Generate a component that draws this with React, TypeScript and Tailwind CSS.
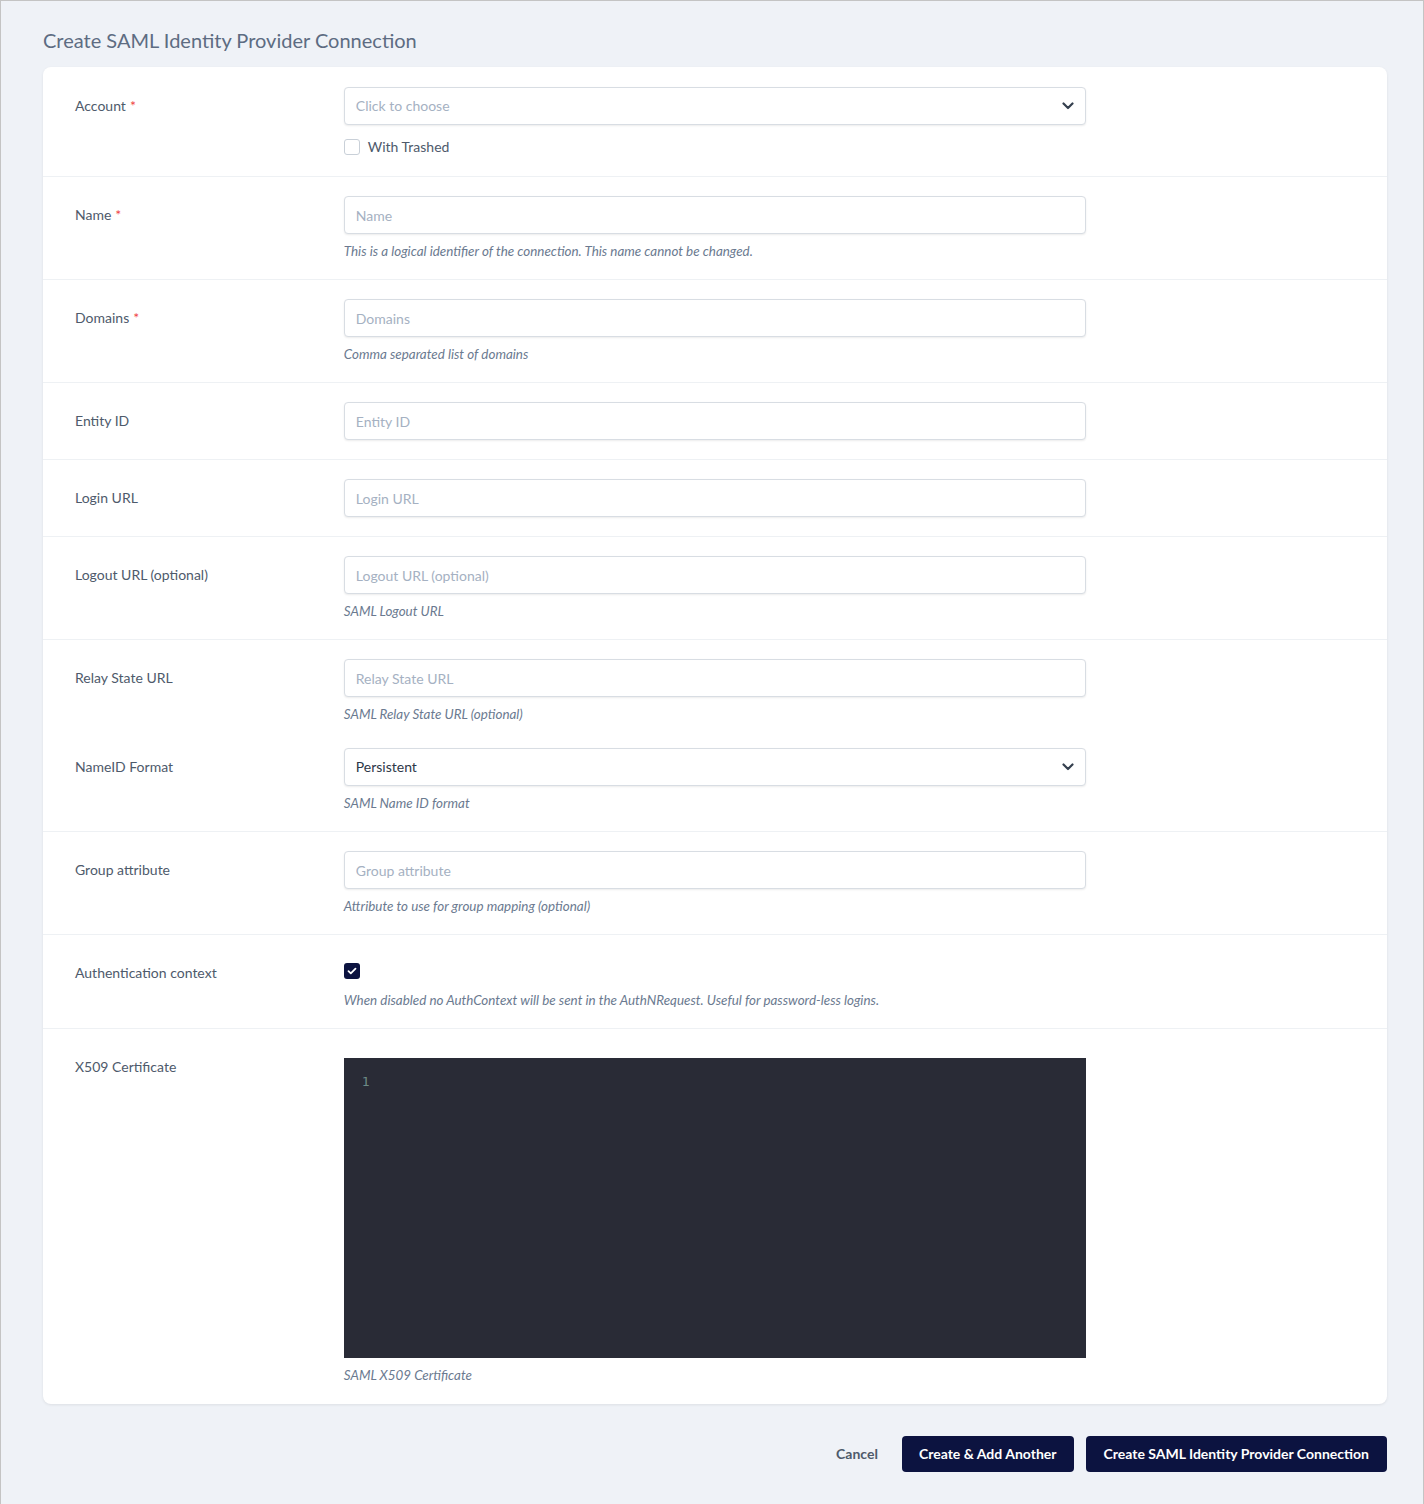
import React from 'react';

const font = { fontFamily: 'Lato, "Noto Sans", sans-serif' };

const Chevron: React.FC = () => (
  <svg width="12" height="8" viewBox="0 0 12 8" className="text-[#35404f]">
    <path d="M1.5 1.5 L6 6 L10.5 1.5" fill="none" stroke="currentColor" strokeWidth="2.2" strokeLinecap="round" strokeLinejoin="round" />
  </svg>
);

const Required = () => <span className="text-[#ef4444] ml-1">*</span>;

const Help: React.FC<{ children: React.ReactNode }> = ({ children }) => (
  <p className="mt-2 text-[13.4px] leading-[18px] italic text-[#6b7a90]">{children}</p>
);

const TextInput: React.FC<{ placeholder: string }> = ({ placeholder }) => (
  <input
    placeholder={placeholder}
    className="w-full h-[38px] px-[11px] rounded border border-[#d8dde3] shadow-[0_1px_2px_rgba(0,0,0,0.08)] text-sm text-[#3c4858] placeholder:text-[#a5b1c2] outline-none bg-white"
  />
);

const Select: React.FC<{ value: string; placeholder?: boolean }> = ({ value, placeholder }) => (
  <div className="w-full h-[38px] pl-[11px] pr-[11px] rounded border border-[#d8dde3] shadow-[0_1px_2px_rgba(0,0,0,0.08)] bg-white flex items-center justify-between">
    <span className={placeholder ? 'text-sm text-[#a5b1c2]' : 'text-sm text-[#2d3748]'}>{value}</span>
    <Chevron />
  </div>
);

const Row: React.FC<{ label: React.ReactNode; children: React.ReactNode; border?: boolean; pad?: string }> = ({
  label,
  children,
  border = true,
  pad = 'py-[19px]',
}) => (
  <div className={`flex ${border ? 'border-t border-[#eef1f4]' : ''}`}>
    <div className={`w-1/5 px-8 ${pad}`}>
      <div className="h-[38px] flex items-center text-sm text-[#4e5a6b]">{label}</div>
    </div>
    <div className={`w-3/5 px-8 ${pad}`}>{children}</div>
  </div>
);

export default function App() {
  return (
    <div style={font} className="w-[1424px] min-h-[1504px] bg-[#eff2f7] border border-[#c4c4c4]">
      <div className="pl-[42px] pr-[36px] pt-[25px] pb-8">
        <h1 className="text-xl leading-7 text-[#5d6c82] mb-[13px]">Create SAML Identity Provider Connection</h1>

        <div className="bg-white rounded-lg shadow-[0_1px_3px_rgba(0,0,0,0.08)]">
          <Row label={<>Account<Required /></>} border={false} pad="pt-5 pb-[19px]">
            <Select value="Click to choose" placeholder />
            <label className="mt-3 flex items-center gap-2 h-5">
              <span className="w-4 h-4 rounded-[3px] border border-[#c9d0d8] bg-white" />
              <span className="text-sm text-[#4e5a6b]">With Trashed</span>
            </label>
          </Row>

          <Row label={<>Name<Required /></>}>
            <TextInput placeholder="Name" />
            <Help>This is a logical identifier of the connection. This name cannot be changed.</Help>
          </Row>

          <Row label={<>Domains<Required /></>}>
            <TextInput placeholder="Domains" />
            <Help>Comma separated list of domains</Help>
          </Row>

          <Row label="Entity ID">
            <TextInput placeholder="Entity ID" />
          </Row>

          <Row label="Login URL">
            <TextInput placeholder="Login URL" />
          </Row>

          <Row label="Logout URL (optional)">
            <TextInput placeholder="Logout URL (optional)" />
            <Help>SAML Logout URL</Help>
          </Row>

          <Row label="Relay State URL" pad="pt-[19px] pb-[6px]">
            <TextInput placeholder="Relay State URL" />
            <Help>SAML Relay State URL (optional)</Help>
          </Row>

          <Row label="NameID Format" border={false}>
            <Select value="Persistent" />
            <Help>SAML Name ID format</Help>
          </Row>

          <Row label="Group attribute">
            <TextInput placeholder="Group attribute" />
            <Help>Attribute to use for group mapping (optional)</Help>
          </Row>

          <div className="flex border-t border-[#eef1f4]">
            <div className="w-1/5 px-8 py-[19px]">
              <div className="h-[38px] flex items-center text-sm text-[#4e5a6b]">Authentication context</div>
            </div>
            <div className="w-3/5 px-8 pt-7 pb-[19px]">
              <span className="w-4 h-4 rounded-[3px] bg-[#0c1340] flex items-center justify-center">
                <svg width="10" height="8" viewBox="0 0 10 8">
                  <path d="M1.5 4.2 L3.8 6.3 L8.5 1.6" fill="none" stroke="white" strokeWidth="1.8" strokeLinecap="round" strokeLinejoin="round" />
                </svg>
              </span>
              <p className="mt-3 text-[13.4px] leading-[18px] italic text-[#6b7a90]">
                When disabled no AuthContext will be sent in the AuthNRequest. Useful for password-less logins.
              </p>
            </div>
          </div>

          <div className="flex border-t border-[#eef1f4]">
            <div className="w-1/5 px-8 py-[19px]">
              <div className="h-[38px] flex items-center text-sm text-[#4e5a6b]">X509 Certificate</div>
            </div>
            <div className="w-3/5 px-8 pt-[29px] pb-5">
              <div className="h-[300px] bg-[#292b36] px-[18px] pt-[10px]">
                <span className="text-[13px] leading-[18px] text-[#6c8a87]" style={{ fontFamily: '"DejaVu Sans Mono", monospace' }}>1</span>
              </div>
              <Help>SAML X509 Certificate</Help>
            </div>
          </div>
        </div>

        <div className="flex items-center justify-end mt-8">
          <button className="text-sm font-bold text-[#4e5a6b] mr-6">Cancel</button>
          <button className="h-9 px-[17px] rounded bg-[#0c1340] text-white text-sm font-bold mr-3">Create &amp; Add Another</button>
          <button className="h-9 px-[18px] rounded bg-[#0c1340] text-white text-sm font-bold">Create SAML Identity Provider Connection</button>
        </div>
      </div>
    </div>
  );
}
